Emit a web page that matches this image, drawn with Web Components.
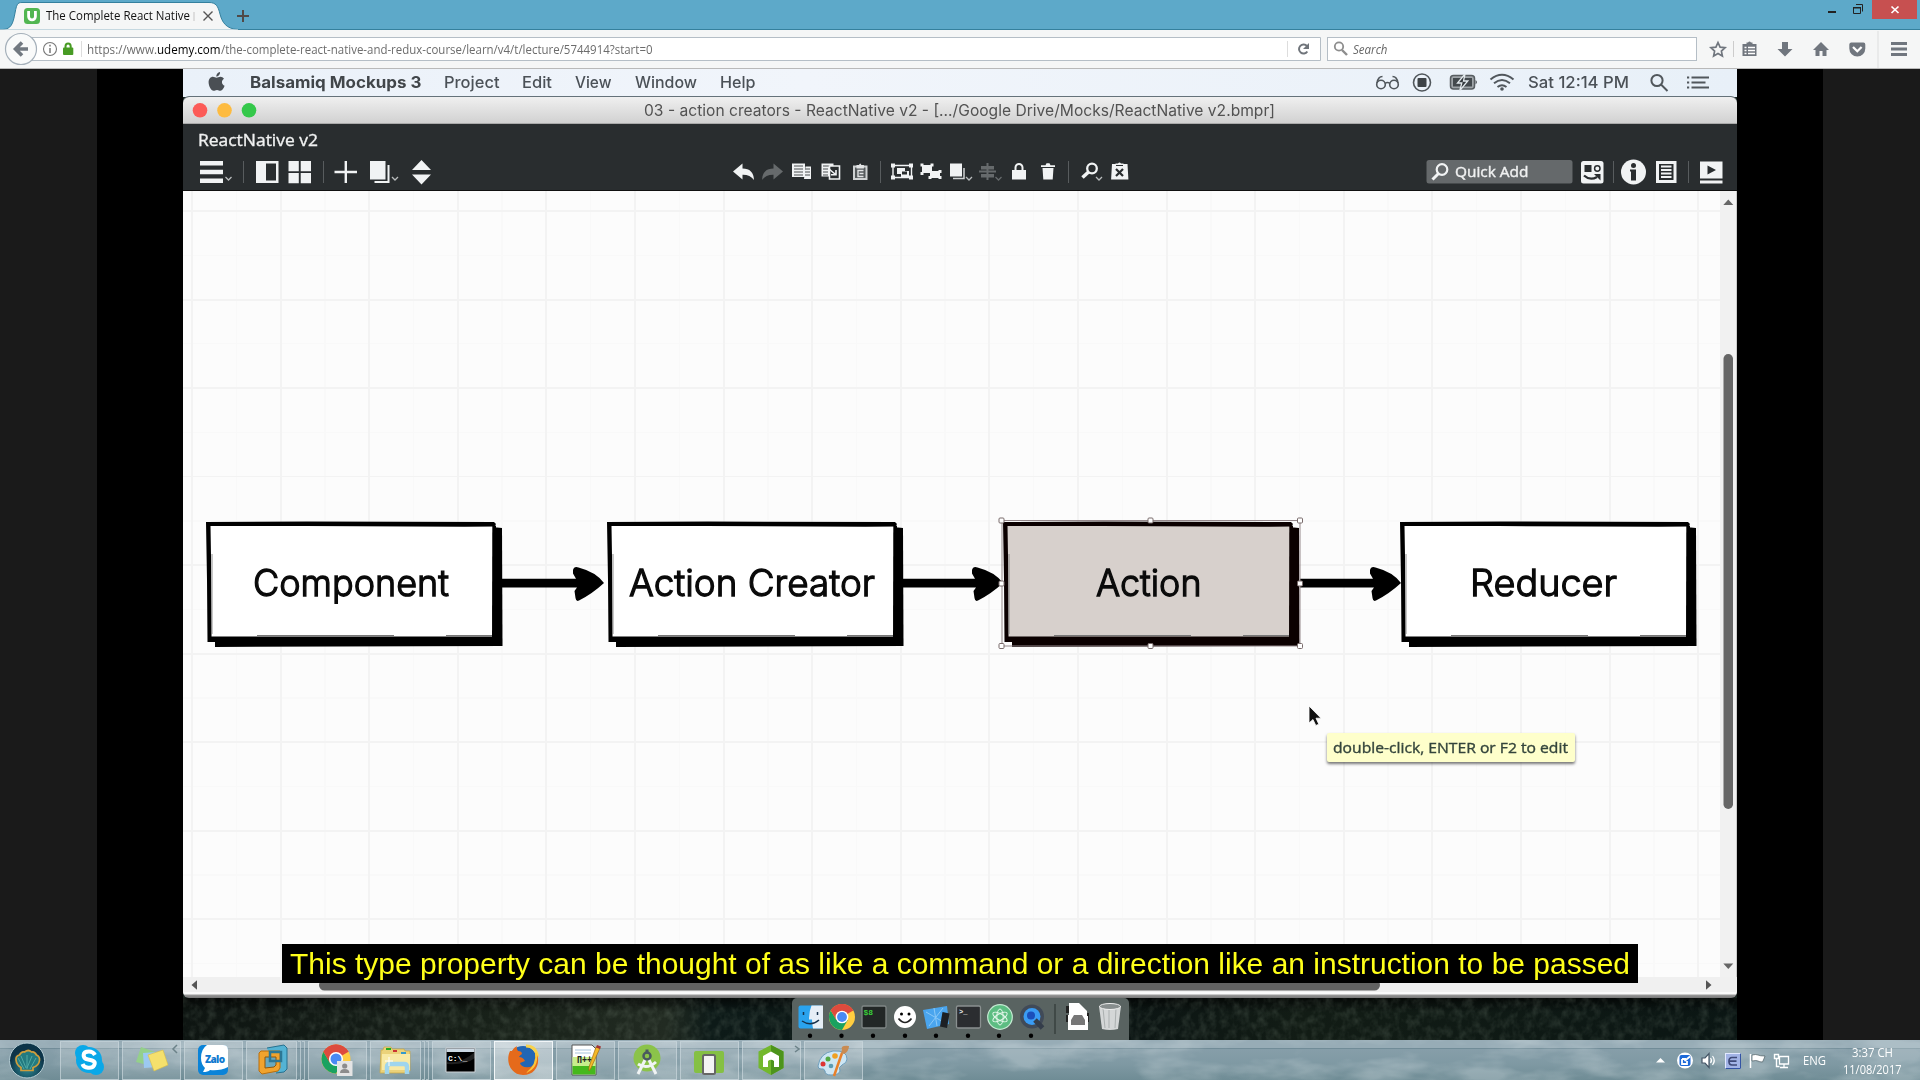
<!DOCTYPE html>
<html lang="en"><head><meta charset="utf-8"><title>The Complete React Native</title>
<style>
html,body{margin:0;height:100%;background:#000;overflow:hidden}
body{width:1920px;height:1080px;display:flex;flex-direction:column}
body>*{flex:none}
</style></head>
<body>
<browser-tabs></browser-tabs>
<browser-nav></browser-nav>
<lecture-player></lecture-player>
<task-bar></task-bar>
<script>
const UI = "'Open Sans','Noto Sans',sans-serif", MAC = "Inter,sans-serif";

/* Lays out items left to right; drawings use page coordinates through their viewBox. */
function row(x0, y0, h, items) {
  let cur = x0, out = '';
  for (const it of items) {
    const [kind, x, w] = it;
    const m = (x - cur).toFixed(2);
    if (kind === 's') out += `<svg style="flex:none;margin-left:${m}px" width="${w}" height="${h}" viewBox="${x} ${y0} ${w} ${h}">${it[3]}</svg>`;
    else out += `<fit-text w="${w}" b="${it[3] - y0}" style="margin-left:${m}px;${it[4]}">${it[5]}</fit-text>`;
    cur = x + w;
  }
  return `<div class="row" style="height:${h}px">${out}</div>`;
}
const ROW = ':host{box-sizing:border-box}.row{display:flex;align-items:flex-start;flex:none}svg{display:block;overflow:visible}';

function element(name, css, html, after) {
  customElements.define(name, class extends HTMLElement {
    constructor() {
      super();
      this.attachShadow({mode: 'open'});
    }
    connectedCallback() {
      this.shadowRoot.innerHTML = `<style>*{box-sizing:border-box}${ROW}${css}</style>` + (typeof html === 'function' ? html(this) : html);
      if (after) after(this);
    }
  });
}

/* One line of text, scaled to width w, with its baseline b pixels below the top. */
element('fit-text', `:host{display:block;flex:none;height:0;white-space:nowrap;line-height:0}
span{display:inline-block;transform-origin:0 0;line-height:0}span::before{content:'';display:inline-block;height:var(--b)}`,
  '<span><slot></slot></span>', el => {
    const s = el.shadowRoot.querySelector('span'), w = +el.getAttribute('w');
    el.style.width = w + 'px';
    s.style.setProperty('--b', el.getAttribute('b') + 'px');
    const n = s.getBoundingClientRect().width;
    if (n) s.style.transform = `scaleX(${w / n})`;
  });

const chrome = (cx, cy, r) => `<g transform="translate(${cx} ${cy}) scale(${r / 10})">
<circle r="10" fill="#ffcd40"/><path d="M0 0L-8.66-5A10 10 0 0 1 8.66-5Z" fill="#dd4b3e"/><path d="M-8.66-5A10 10 0 0 0 0 10L4.4 2.3L-4.3 2.3Z" fill="#1aa260"/><path d="M0-5H8.66A10 10 0 0 0-8.66-5L-4.3 2.5Z" fill="#dd4b3e"/><circle r="4.9" fill="#fff"/><circle r="3.8" fill="#4a8af4"/></g>`;

element('browser-tabs', ':host{display:block;height:30px;background:#5da9c9;box-shadow:inset 0 -1px #35809d}',
  row(0, 0, 30, [
    ['s', 0, 46, `<path d="M0 30V29.5H3C11 29 13 24 15 13S18 2.5 24 2.5H209C216 2.5 218 6 220 14S226 29 238 29.5V30Z" fill="#f5f6f6" stroke="#34809e"/><path d="M0 30h238" stroke="#f5f6f6" stroke-width="1.2"/>
      <rect x="24" y="8" width="16" height="16" rx="3.5" fill="#51b651"/><path d="M28.6 11v5.5a3.4 3.4 0 0 0 6.8 0V11" fill="none" stroke="#fff" stroke-width="2.8"/>`],
    ['t', 46, 144, 20.3, `font:12px ${UI};color:#111`, 'The Complete React Native'],
    ['s', 192, 60, `<path d="M194 12v9" stroke="#ddd" stroke-width="2"/><path d="M203.500 11.500l9 9m0-9l-9 9" stroke="#555" stroke-width="1.4"/><path d="M237 16h12m-6-6v12" stroke="#504a48" stroke-width="2"/>`],
    ['s', 1820, 97, `<path d="M1828 11h8v2h-8z" fill="#222"/><path d="M1853.500 7.500h7v6h-7zM1856 4.500h6.500v7" fill="none" stroke="#222"/><path d="M1853 7h8v1.500h-8z" fill="#222"/><path d="M1872 0h45v19h-45z" fill="#c75050"/><path d="M1891.500 6.500l7 6.500m0-6.500l-7 6.500" stroke="#fff" stroke-width="1.7"/>`]
  ]));

element('browser-nav', ':host{display:block;height:39px;background:#f5f6f6;border-bottom:1px solid #b9b9b9}',
  row(0, 30, 38, [
    ['s', 0, 87, `<path d="M32 37.500H1320.500V60.500H32Z" fill="#fff" stroke="#b5bec6"/><circle cx="21" cy="49" r="15.500" fill="#f9fafa" stroke="#a5b0ba" stroke-width="1.2"/><path d="M28 49H16M22 42.500L15.500 49l6.500 6.500" fill="none" stroke="#717880" stroke-width="3.600"/>
      <circle cx="50" cy="49" r="6.500" fill="none" stroke="#777" stroke-width="1.1"/><path d="M50 48v5m0-8.200v1.800" stroke="#777" stroke-width="1.5"/><path d="M65.500 48v-1.500a2.600 3 0 0 1 5.200 0V48" fill="none" stroke="#489b24" stroke-width="2"/><rect x="63" y="47.500" width="10.300" height="7.500" rx="1" fill="#489b24"/><path d="M81.500 41v16" stroke="#ddd"/>`],
    ['t', 87, 70, 54, `font:12px ${UI};color:#6c6c6c`, 'https://www.'],
    ['t', 157, 63.5, 54, `font:12px ${UI};color:#000`, 'udemy.com'],
    ['t', 220.5, 431.5, 54, `font:12px ${UI};color:#6c6c6c`, '/the-complete-react-native-and-redux-course/learn/v4/t/lecture/5744914?start=0'],
    ['s', 1287, 63, `<path d="M1287.500 41v16" stroke="#ddd"/><path d="M1307 46.200A4.500 4.500 0 1 0 1307.300 51.500" fill="none" stroke="#70757b" stroke-width="2"/><path d="M1309 43v6h-6z" fill="#70757b"/>
      <rect x="1327.500" y="37.500" width="369" height="23" fill="#fff" stroke="#b5bec6"/><circle cx="1339" cy="46.500" r="4.200" fill="none" stroke="#8d8d8d" stroke-width="1.800"/><path d="M1342 50l5 5" stroke="#8d8d8d" stroke-width="2.400"/>`],
    ['t', 1353, 34.5, 54, `font:italic 12px ${UI};color:#666`, 'Search'],
    ['s', 1705, 210, `<g fill="#70767e"><path d="M1718 42.500l2.100 4.600 5 .6-3.700 3.400 1 5-4.400-2.500-4.400 2.500 1-5-3.700-3.400 5-.6z" fill="none" stroke="#70767e" stroke-width="1.700"/><path d="M1733 41h1v16h-1z" fill="#ccc"/>
      <path d="M1746.500 44v-1.500h1.500q1.500-2 3 0h1.500v1.500h4V56H1742.500V44z"/><path d="M1744.500 47.500h2m1.500 0h7m-10.500 3h2m1.500 0h7m-10.500 3h2m1.500 0h7" stroke="#fff" stroke-width="1.500"/>
      <path d="M1782 42h6v7h4.500l-7.500 7.500-7.500-7.500h4.500z"/><path d="M1821 42l8 8h-2.500v6h-4v-5h-3v5h-4v-6h-2.500z"/>
      <path d="M1851 42.500h12.500a2 2 0 0 1 1.800 2v4a8 8 0 0 1-16 0v-4a2 2 0 0 1 1.700-2z"/><path d="M1853 47l4.300 4.200 4.300-4.200" fill="none" stroke="#fff" stroke-width="2.300"/><path d="M1877.500 31h1v37h-1z" fill="#ddd"/>
      <path d="M1891 42h16v3h-16zm0 5.500h16v3h-16zm0 5.500h16v3h-16z"/></g>`]
  ]));

element('mac-menubar', `:host{display:block;height:28px;background:linear-gradient(90deg,#eaf1f9,#f1f5fb 40%,#e8f0f8);}`,
  row(183, 69, 28, [
    ['s', 208, 18, `<path d="M220 72c.3 2.400-1.700 4.500-3.800 4.500 0-2.200 1.700-4.200 3.800-4.500M216.500 77.800c1 0 2.300-1 4-1 1.300 0 2.700.8 3.500 2-3 1.700-2.600 5.700.6 7-.7 2.100-2.400 4.900-4.200 4.900-1.300 0-1.800-.8-3.400-.8s-2.200.8-3.400.8c-2.600 0-5-5-5-8.500 0-3.300 2.100-5.400 4.300-5.400 1.500 0 2.600 1 3.600 1z" fill="#4a4f54"/>`],
    ['t', 249.500, 171.5, 88.3, `font:700 16px ${MAC};color:#41464a`, 'Balsamiq Mockups 3'],
    ...[[443.5, 55.5, 'Project'], [521.5, 30, 'Edit'], [575, 36.500, 'View'], [635, 62, 'Window'], [720, 35.500, 'Help']].map(a => ['t', a[0], a[1], 88.3, `font:500 16px ${MAC};color:#4b5157`, a[2]]),
    ['s', 1376, 140, `<g fill="none" stroke="#51575c" stroke-width="1.600"><circle cx="1381" cy="84.500" r="4.300"/><circle cx="1394" cy="84.500" r="4.300"/><path d="M1385 83.500q2.500-2 5 0M1377 83q1-6.500 5.500-6.500M1398 83q-1-6.500-5.500-6.500"/><circle cx="1422" cy="82.500" r="8.500"/></g><rect x="1417.500" y="78" width="9" height="9" rx="1" fill="#3e4347"/>
      <rect x="1450.500" y="75.500" width="24" height="13.500" rx="3" fill="#9fa5a9" stroke="#575d61" stroke-width="1.500"/><path d="M1475.500 80q3 2.200 0 4.500z" fill="#575d61"/><path d="M1453 78h19v8.500h-19z" fill="#43494d"/><path d="M1465 74l-7.500 9h4.300l-2 7.500 8-9.500h-4.300z" fill="#33393d" stroke="#e4eaee" stroke-width="1.300"/>
      <g fill="none" stroke="#51575c" stroke-width="2"><path d="M1490.500 79.500q11.500-9.500 23 0M1494 83.300q8-6.500 16 0M1497.500 87q4.500-3.500 9 0"/></g><circle cx="1502" cy="89" r="1.800" fill="#51575c"/>`],
    ['t', 1528, 101, 88.3, `font:500 16px ${MAC};color:#4b5157`, 'Sat 12:14 PM'],
    ['s', 1650, 62, `<g fill="none" stroke="#51575c" stroke-width="2"><circle cx="1657" cy="80.500" r="5.600"/><path d="M1661 84.500l6.500 6.500"/><path d="M1691.500 77.500H1709M1691.500 82.500h14M1691.500 87.500H1709M1687 77.500h2.200m-2.200 5h2.200m-2.200 5h2.200" stroke-width="2.200"/></g>`]
  ]));

const chev = (x, c = '#b9bcbd') => `<path d="M${x} 177l3 3 3-3" fill="none" stroke="${c}" stroke-width="1.300"/>`;
element('mockup-toolbar', `:host{display:block;height:67px;background:#292d2f;border-bottom:1px solid #111}`,
  row(183, 124, 29, [['t', 197.5, 120, 146, `font:400 16px ${UI};color:#f0f1f1;-webkit-text-stroke:.35px #f0f1f1`, 'ReactNative v2']]) +
  row(183, 153, 37, [
    ['s', 200, 235, `<g fill="#f1f3f4"><path d="M200 161h23v4.500h-23zm0 8.800h23v4.500h-23zm0 8.700h23v4.500h-23z"/>${chev(225.500)}<path d="M243 161h1v22h-1zm80 0h1v22h-1z" fill="#585c5e"/>
      <path d="M256 161h22.500v22H256zm10 2.500v17h10v-17z" fill-rule="evenodd"/><path d="M288.500 161h10.300v10.200h-10.300zm12.200 0H311v10.200h-10.300zm-12.200 12h10.300v10.200h-10.300zm12.200 0H311v10.200h-10.300z"/><path d="M334.500 170.800h22.500v2.400h-22.500zM344.600 161h2.400v22h-2.400z"/>
      <path d="M370 161h15.500v18.500H370z"/><path d="M388.500 165v17h-14" fill="none" stroke="#f1f3f4" stroke-width="2"/>${chev(392)}<path d="M421.500 160l9.500 10h-19zM421.500 184.500l-9.500-10h19z"/></g>`],
    ['s', 733, 400, `<g fill="#f1f3f4"><path d="M733 171.500l9.500-8v5q11 0 11.500 11.500-4-5.500-11.500-5.300v4.800z"/><path d="M783 171.500l-9.500-8v5q-11 0-11.500 11.500 4-5.500 11.500-5.300v4.800z" fill="#666a6c"/>
      <path d="M792 163.500h13V177h-13z"/><path d="M794 166h9m-9 3h9m-9 3h9m-9 3h9" stroke="#4a4e50"/><path d="M805.500 166.500h5.500v12.500h-7" fill="#f1f3f4"/><path d="M805 169h5m-5 3h5m-5 3h5" stroke="#4a4e50"/>
      <path d="M821.500 163.500h12v13h-12z"/><path d="M823 166h7m-7 3h5m-5 3h5m-5 3h5" stroke="#4a4e50"/><path d="M829.500 166h10v13h-10z" fill="#292d2f" stroke="#f1f3f4" stroke-width="1.600"/><path d="M829 169l6 5m1-4v4.800h-5" fill="none" stroke="#f1f3f4" stroke-width="1.600"/>
      <path d="M854 166.500h12.500v12.500h-12.500z" fill="#555a5c" stroke="#cfd2d3" stroke-width="2"/><path d="M856.500 168.500v-3.500h2.500q1.200-3 2.400 0h2.500v3.500z" fill="#e2e4e5"/><path d="M863.500 170.500h-5.500v6h5.500m-4-3h4" fill="none" stroke="#e2e4e5" stroke-width="1.400"/>
      <path d="M880 161h1v22h-1zM1068 161h1v22h-1z" fill="#585c5e"/>
      <path d="M893 165.500h18.500v12h-18.500z" fill="none" stroke="#f1f3f4" stroke-width="1.400"/><path d="M891 163.500h4v4h-4zm18 0h4v4h-4zm-18 12h4v4h-4zm18 0h4v4h-4z"/><path d="M897 168h8v3h4v6h-8v-3h-4z"/><path d="M902 171.500h5v3h-5z" fill="#292d2f"/>
      <path d="M922 165h10v8h-10zM930 171h10v7h-10z"/><path d="M920.500 163.500h3v3h-3zm10 0h3v3h-3zm-10 8.500h3v3h-3zm8 4h3v3h-3zm10-6h3v3h-3zm0 6h3v3h-3z"/>
      <path d="M950 163.500h12v13h-12z"/><path d="M964 168v10.500h-11" fill="none" stroke="#cfd2d3" stroke-width="1.500"/>${chev(966)}
      <path d="M986.500 163h2v17h-2zM981 166h13v3.500h-13zM979 170.500h17v2h-17zM981 174h13v3.500h-13z" fill="#666a6c"/>${chev(995.500, '#666a6c')}
      <path d="M1012 170h14v9.500h-14z"/><path d="M1015.500 171v-3.500a3.500 3.500 0 0 1 7 0v3.500" fill="none" stroke="#f1f3f4" stroke-width="2"/>
      <path d="M1042.500 168h11l-.8 11.500h-9.400zM1041 165.200h4.500l1-2h3l1 2h4.500v1.800h-14z"/>
      <circle cx="1092" cy="168.500" r="4.800" fill="none" stroke="#f1f3f4" stroke-width="2.300"/><path d="M1088.500 172l-6 5.500" stroke="#f1f3f4" stroke-width="3.500"/>${chev(1096)}
      <path d="M1112 164h4v2h7v-2h4.500l.9 15.500h-17.300z"/><path d="M1115.500 165v-1.500h2.500q1.500-2 3 0h2.500v1.500z"/><path d="M1116 169l7 7m0-7l-7 7" stroke="#292d2f" stroke-width="2.200"/></g>`],
    ['s', 1426, 29, `<rect x="1426.500" y="160" width="146" height="23.500" rx="2.500" fill="#65696b"/><circle cx="1442" cy="169.500" r="5.300" fill="none" stroke="#f1f3f4" stroke-width="2.200"/><path d="M1438.500 173.500l-6 6" stroke="#f1f3f4" stroke-width="3"/>`],
    ['t', 1455, 73.5, 176.6, `font:400 15px ${UI};color:#f0f1f1;-webkit-text-stroke:.4px #f0f1f1;position:relative`, 'Quick Add'],
    ['s', 1581, 145, `<rect x="1581" y="161" width="22.500" height="22.500" rx="2.500" fill="#f1f3f4"/><path d="M1584.500 165h7v7h-7z" fill="#292d2f"/><circle cx="1597.300" cy="168.500" r="2.700" fill="none" stroke="#292d2f" stroke-width="1.500"/><path d="M1584 175.500q6 5.500 13 1.500" fill="none" stroke="#292d2f" stroke-width="2.300"/><path d="M1594 174h6.500v6.500z" fill="#292d2f"/><path d="M1613 161h1v22h-1zM1688 161h1v22h-1z" fill="#585c5e"/>
      <circle cx="1633.500" cy="172" r="12.500" fill="#f1f3f4"/><circle cx="1633.500" cy="165.500" r="2.500" fill="#292d2f"/><path d="M1630 169.500h6v11h-5v-9h-1z" fill="#292d2f"/>
      <path d="M1656 161h20.500v22H1656z" fill="#f1f3f4"/><path d="M1659 164h14.500v16H1659z" fill="#292d2f"/><path d="M1661 166.500h10.500m-10.500 3.500h10.500m-10.500 3.500h10.500m-10.500 3.500h10.500" stroke="#f1f3f4" stroke-width="1.800"/>
      <path d="M1700 161.500h22.500v17H1700zM1700 180.500h22.500v3H1700z" fill="#f1f3f4"/><path d="M1707.500 165.500l8.500 4.500-8.500 4.500z" fill="#292d2f"/>`]
  ]));

element('title-bar', ':host{display:block;height:27px;background:linear-gradient(#f0f0f0,#e6e6e6 30%,#d0d0d0);border-radius:6px 6px 0 0;box-shadow:0 -1px #65727a,inset 0 -1px #aaa}',
  row(183, 97, 27, [
    ['s', 192, 66, `<circle cx="200" cy="110.300" r="7.300" fill="#fc5b57"/><circle cx="224.500" cy="110.300" r="7.300" fill="#fdbb40"/><circle cx="249" cy="110.300" r="7.300" fill="#34c84a"/>`],
    ['t', 644, 631, 116, `font:400 15.5px ${MAC};color:#525252`, '03 - action creators - ReactNative v2 - [.../Google Drive/Mocks/ReactNative v2.bmpr]']
  ]));

element('diagram-node', `:host{position:absolute;top:329px;width:297px;height:129px;z-index:0}.in{display:flex}svg{position:absolute;inset:0;z-index:-1}`,
  el => {
    const sel = el.hasAttribute('selected'), ink = sel ? '#0b0000' : '#000', x = +el.dataset.x, w = +el.dataset.w;
    return `<svg width="297" height="129" viewBox="0 0 297 129">
      <path d="M8.500 9.500L290 7.500l5 .5.500 118L8 127z" fill="${ink}"/>
      <path d="M1.500 4L287 3.500 286.500 118 1.800 118z" fill="${sel ? '#d7d0cc' : '#fff'}"/>
      <path d="M-1 2L100 1.500 287 2l2 2-1.500 2.500-30 .3-160-.8-94-.1L4 36 4.500 116.500H287.500V122H.5L0 60z" fill="${ink}"/>
      <path d="M285.300 6L289 5.500 291 122h-6z" fill="${ink}"/>
      <path d="M50 115.500h137m52 0h46" stroke="#777" stroke-width="1"/><path d="M5 34v80" stroke="#777" stroke-width=".8"/>
      </svg><div class="in"><fit-text w="${w}" b="75.500" style="margin-left:${x}px;font:300 37px Inter,sans-serif;font-variant-ligatures:none;color:#0a0a0a;-webkit-text-stroke:1.300px #0a0a0a">${el.getAttribute('label')}</fit-text></div>`;
  });
element('diagram-arrow', ':host{position:absolute;top:374.500px;height:36px}', el => {
  const w = +el.getAttribute('w');
  return `<svg width="${w}" height="36" viewBox="${-w} -17 ${w} 36"><path d="M${-w} -4.200H-28L-31-9.500V-13Q-30-17-25.500-15.500Q-8-11 0 0Q-12 11-25 17.500Q-28 19-28.500 15L-29.500 8-27 4.500H${-w}Z" fill="#000"/></svg>`;
});
element('tool-tip', ':host{display:block;position:absolute;left:1143.5px;top:542px;width:248.500px;height:29px;background:#feffcb;box-shadow:0 2px 3px #0008;border-radius:2px}',
  `<fit-text w="235" b="19.700" style="margin-left:6.500px;font:400 14px ${UI};color:#34453c;-webkit-text-stroke:.35px #34453c">double-click, ENTER or F2 to edit</fit-text>`);

element('diagram-canvas', `:host{display:block;position:relative;width:1537px;height:786px;overflow:hidden;background:
  repeating-linear-gradient(90deg,transparent 0 8px,#f3f3f3 8px 10px,transparent 10px 88.600px),
  repeating-linear-gradient(180deg,transparent 0 19px,#f3f3f3 19px 21px,transparent 21px 88.500px),
  repeating-linear-gradient(90deg,transparent 0 52.600px,#f9f9f9 52.600px 54px,transparent 54px 88.600px),
  repeating-linear-gradient(180deg,transparent 0 63.500px,#f9f9f9 63.500px 65px,transparent 65px 88.500px),#fcfcfc}
  .over{position:absolute;left:0;top:0;z-index:2}tool-tip{z-index:3}`,
  () => {
    const h = [];
    for (const [x, y] of [[1001.5, 520.5], [1150.5, 520.5], [1300, 520.5], [1001.5, 583.5], [1300, 583.5], [1001.5, 646], [1150.5, 646], [1300, 646]])
      h.push(`<rect x="${x - 2.500}" y="${y - 2.500}" width="5" height="5" rx="1" fill="#fff" stroke="#796b6b"/>`);
    return `<diagram-node style="left:23.500px" data-x="46.500" data-w="196" label="Component"></diagram-node>
    <diagram-node style="left:424.500px" data-x="21" data-w="246" label="Action Creator"></diagram-node>
    <diagram-node selected style="left:820.500px" data-x="92.500" data-w="105.500" label="Action"></diagram-node>
    <diagram-node style="left:1217.500px" data-x="69.500" data-w="147" label="Reducer"></diagram-node>
    <diagram-arrow w="102" style="left:319px"></diagram-arrow><diagram-arrow w="101" style="left:719px"></diagram-arrow><diagram-arrow w="101" style="left:1117px"></diagram-arrow>
    <svg class="over" width="1537" height="786" viewBox="183 191 1537 786"><rect x="1002" y="520.500" width="298" height="125.500" fill="none" stroke="#94878a"/>${h.join('')}
    <path d="M1309 706v17l4-3.500 2.800 6 3-1.300-2.800-6h5z" fill="#111" stroke="#fff" stroke-width=".8"/></svg><tool-tip></tool-tip>`;
  });

element('v-scroll', ':host{display:block;width:17px;height:786px;background:#f1f1f1;border-right:1px solid #ccc}',
  row(1720, 191, 786, [['s', 1720, 16, '<path d="M1728.300 199.500l5 5.500h-10zM1728.300 969l5-5.500h-10z" fill="#666"/><rect x="1723.500" y="354" width="9.500" height="455" rx="4.700" fill="#666"/>']]));
element('h-scroll', ':host{display:block;height:21px;background:linear-gradient(#f0f0f0 0 15px,#fafafa 15px 17px,#9a9a9a 18px,#777);border-radius:0 0 6px 6px}',
  row(183, 977, 21, [['s', 183, 1553, '<path d="M191.500 985l5.500-4.800v9.600zM1711.500 985l-5.500-4.800v9.600z" fill="#555"/><rect x="319" y="979.500" width="1061" height="11" rx="5.500" fill="#626262"/>']]));

element('mac-dock', ':host{display:block;width:337px;height:42px;background:#596361;border-radius:5px 5px 0 0}',
  row(792, 998, 42, [['s', 792, 337, `
    <rect x="798.500" y="1005.500" width="24.500" height="23" rx="2" fill="#2aa3ee"/><path d="M811.500 1005.500h11.500v23h-10q-1-5-1-9h-3q0-8 2.500-14z" fill="#e6eef6"/><path d="M803.500 1012v3m14-3v3M802 1021q9 6 17-1" stroke="#16324c" stroke-width="1.500" fill="none"/>
    ${chrome(842, 1017, 13)}
    <rect x="862" y="1006" width="24" height="22" rx="1.500" fill="#222726" stroke="#7f8685" stroke-width="1.300"/><text x="863.500" y="1015" font-family="Liberation Mono" font-weight="700" font-size="8" fill="#39cf39">$8</text>
    <circle cx="905" cy="1017" r="11" fill="#fff"/><circle cx="901.500" cy="1014" r="1.500"/><circle cx="909" cy="1014" r="1.500"/><path d="M898.500 1018.500q6.500 8 13 0" fill="none" stroke="#222" stroke-width="1.700"/>
    <path d="M923 1010l24-4 2 18-22 5z" fill="#4aa5ee"/><path d="M926 1012l19 11m-16 3l14-18m-9 0l3 18" stroke="#8cc9f7" stroke-width="1"/><path d="M942.500 1012l7 1.500-2.500 14.500-7-1.500z" fill="#1d2024"/>
    <rect x="956.500" y="1006" width="24" height="22" rx="1.500" fill="#2b2d30" stroke="#8a9090" stroke-width="1.300"/><text x="959" y="1014" font-family="Liberation Mono" font-weight="700" font-size="7" fill="#eee">&gt;_</text>
    <circle cx="1000" cy="1017" r="12.300" fill="#5cbd82" stroke="#c5ebd3" stroke-width="1.200"/><g fill="none" stroke="#e3f6ea" stroke-width="1"><ellipse cx="1000" cy="1017" rx="8" ry="3.200" transform="rotate(30 1000 1017)"/><ellipse cx="1000" cy="1017" rx="8" ry="3.200" transform="rotate(90 1000 1017)"/><ellipse cx="1000" cy="1017" rx="8" ry="3.200" transform="rotate(150 1000 1017)"/></g>
    <circle cx="1032" cy="1016.500" r="12" fill="#404a58"/><circle cx="1032" cy="1016.500" r="8.500" fill="#3a9cf4"/><circle cx="1031" cy="1015.500" r="4" fill="#1b4fba"/><path d="M1035 1020l7.500 8" stroke="#343d4a" stroke-width="5"/>
    <path d="M1055 1004v30" stroke="#333c3a" stroke-width="1.300"/><path d="M1066 1006h3v7h-3zM1066 1015h3v7h-3zM1085 1013h4v9h-4z" fill="#222"/><path d="M1069 1003h10l8 8v5h1v14h-20v-15h1z" fill="#fff"/><path d="M1071 1020l3-5h8l3 5v5h-14z" fill="#777"/>
    <path d="M1099 1006h22l-3 23q-8 2-16 0z" fill="#d4d7d7"/><path d="M1103 1008l2 20m4-20v20m7-20l-1 20" stroke="#aaafaf"/><ellipse cx="1110" cy="1006.500" rx="10.500" ry="3" fill="#888e8e" stroke="#f0f0f0"/>
    ${[810, 841.5, 873, 905, 936, 968, 999, 1031].map(x => `<circle cx="${x}" cy="1035.700" r="2.200"/>`).join('')}`]]));

element('video-caption', `:host{display:flex;position:absolute;left:282px;top:875px;width:1356px;height:38.500px;background:#000}`,
  `<fit-text w="1340" b="30" style="margin-left:8px;font:30px 'Liberation Sans',sans-serif;color:#ffff19">This type property can be thought of as like a command or a direction like an instruction to be passed</fit-text>`);

element('lecture-player', `:host{display:flex;position:relative;height:971px;background:#000;justify-content:space-between}
  .side{width:97px;background:#1a1a1a}.video{width:1554px;display:flex;flex-direction:column;background:#18231f;overflow:hidden}.video>*{flex:none}.body{display:flex}
  .video>.desk{flex:1;position:relative;overflow:hidden;display:flex;justify-content:center;background:linear-gradient(#000a,#0000 14px),linear-gradient(90deg,#0e1512,#182119 20%,#222b22 31%,#0d1a18 34%,#0b1413 60%,#121c15 72%,#0b1614)}
  .desk svg{position:absolute;left:0;top:0;opacity:.22}mac-dock{position:relative;left:.5px}`,
  `<div class="side"></div><div class="video"><mac-menubar></mac-menubar><title-bar></title-bar><mockup-toolbar></mockup-toolbar>
  <div class="body"><diagram-canvas></diagram-canvas><v-scroll></v-scroll></div><h-scroll></h-scroll>
  <div class="desk"><svg width="1554" height="42"><filter id="n" x="0" y="0" width="1" height="1"><feTurbulence type="fractalNoise" baseFrequency=".12 .1" numOctaves="3" seed="4"/><feColorMatrix values="0 0 0 0 .3  0 0 0 0 .38  0 0 0 0 .3  1.800 0 0 0 -.7"/></filter><rect width="1554" height="42" filter="url(#n)"/></svg><mac-dock></mac-dock></div></div>
  <div class="side"></div><video-caption></video-caption>`);

element('task-button', `:host{display:flex;gap:1px;width:59px;height:39px}.b{flex:1;border:1px solid #c9d6dcb0;background:linear-gradient(#ffffff38,#ffffff18);display:flex;align-items:center;justify-content:center}
  .b svg{margin:-2px 0 0 -2px}.e{width:3px;border:1px solid #c9d6dcb0;border-left:0}:host([active]) .b{border-color:#f2f6f8;background:linear-gradient(#ffffff70,#ffffff60)}`,
  el => `<div class="b"><svg width="34" height="34" viewBox="-17 -17 34 34">${ICONS[el.getAttribute('icon')]}</svg></div>` + (el.hasAttribute('stack') ? '<div class="e"></div><div class="e"></div>' : ''));
const ICONS = {
  skype: `<circle r="13" fill="#0aa8e8"/><circle cx="-6" cy="-7" r="8" fill="#0aa8e8"/><circle cx="7" cy="7" r="8" fill="#0aa8e8"/><path d="M6-5Q4-8.500 0-8.500C-7-8.500-7-1.500-1-.5S7 2 5 5.500-5 8.500-6.500 4" fill="none" stroke="#fff" stroke-width="4"/>`,
  notes: `<path d="M-10-13l14 5-4 14-15-4z" fill="#94d08a"/><path d="M-8-7l14-1 1 15-14 1z" fill="#9cc9f0"/><path d="M-3-5l15-5 5 15-14 6z" fill="#f5e06c" stroke="#d8bd45" stroke-width=".6"/><path d="M26-15l-4 4 4 4" fill="none" stroke="#6c8289" stroke-width="1.500"/>`,
  zalo: `<rect x="-15" y="-15" width="30" height="30" rx="5" fill="#0a83d8"/><path d="M15 7V-10q0-5-5-5H-6q-6 4-6 13 0 6 4 10l-2 4q5 0 7-2 10 1 18-3" fill="#fff"/><text x="-8" y="2.500" font-family="Open Sans" font-weight="800" font-size="10" textLength="20" fill="#1079cf">Zalo</text>`,
  vm: `<g transform="translate(2)"><path d="M-6-12L11-15l3 3V9l-3 3-8 1" fill="#54b3d4" stroke="#27718f"/><path d="M-14-7l2-2H7V8L5 11-11 14l-3-3z" fill="#f1a32d" stroke="#b96f0d"/><path d="M-8-3H3V5l-2 2-9 1z" fill="#6aa9bd" stroke="#8f570a"/><path d="M-3-8H8v9H-3z" fill="none" stroke="#2c7794" stroke-width="2.500"/></g>`,
  chrome: chrome(-1, -1, 14.5) + `<path d="M0 1h15.500v15H0z" fill="#e4e4e4"/><circle cx="7.700" cy="6" r="2.600" fill="#8c8c8c"/><path d="M3 13q0-4 4.700-4t4.700 4z" fill="#8c8c8c"/>`,
  folder: `<g transform="translate(1 1)"><path d="M-15-11h2l1-3h7l1 2h12l1 2h5V10l-2 2h-28z" fill="#ebd27a" stroke="#c8a644" stroke-width=".7"/><path d="M-14-7h28V9h-28z" fill="#f8e9a4"/><path d="M-10-13h5v2h-5z" fill="#2a2"/><path d="M-3-11h4v2h-4z" fill="#c33"/><path d="M5-9h5v2H5z" fill="#39c"/><path d="M-9 13V6q0-3 3-3H8q3 0 3 3v7" fill="none" stroke="#9fd5ee" stroke-width="4.500"/><path d="M-7-4v9m-4-5h8" stroke="#fff"/></g>`,
  cmd: `<path d="M-15-12h29v24h-29z" fill="#000" stroke="#ccd2d6"/><path d="M-14.500-11.500h28v3.500h-28z" fill="#ccd8e2"/><text x="-13" y="1" font-family="Liberation Mono" font-weight="700" font-size="8" fill="#fff">C:\\_</text><path d="M-14 11.500V2Q0 4 14-8v6Q5 5-14 4" fill="#fff" fill-opacity=".13"/>`,
  firefox: `<circle r="14" fill="#2266b4"/><path d="M3-14Q13-14 14.500-3" fill="none" stroke="#f8d24b" stroke-width="3"/><path d="M-5-9q-2-3-1-5-4 2-5 5h-2C-18 2-12 15 0 15S17 5 14.500-5Q13 5 7 7-2 8-3 3L2 1q-2-4-6-4 1-2 3-3 0-3-4-3z" fill="#e56a1b"/><path d="M14-7Q16 8 3 13 14 4 12-7z" fill="#fbc638"/>`,
  npp: `<path d="M-13-15H7l4 4V15h-24z" fill="#fff" stroke="#555"/><path d="M-12.500 3H10.500V14.500h-23z" fill="#45b81c"/><path d="M-12.500-3H10.500V6h-23z" fill="#c8ee8c"/><path d="M-10-10H6m-16 3H6" stroke="#a9c4dd"/><text x="-8" y="3" font-family="Liberation Mono" font-weight="700" font-size="11" textLength="15" lengthAdjust="spacingAndGlyphs" fill="#222">Π++</text><path d="M15-12L6 8 4 11V7l7-20z" fill="#f4b928" stroke="#a36b12" stroke-width=".7"/><path d="M12-15l4 1.500-1 2.500-4-1.500z" fill="#a23333"/>`,
  studio: `<circle cy="-2" r="13.500" fill="#8bc34a"/><path d="M-1-2L-9 14M1-2l8 16M-9 4Q0 10 9 2" fill="none" stroke="#f0f4f4" stroke-width="3"/><circle cy="-4" r="3.500" fill="#8bc34a" stroke="#4a5a5f" stroke-width="2.500"/><path d="M0-10.500v4" stroke="#4a5a5f" stroke-width="3"/>`,
  device: `<rect x="-15" y="-9" width="30" height="22" rx="2" fill="#85c044"/><rect x="-6" y="-5" width="12" height="19" rx="1.500" fill="#f4f4f4" stroke="#666" stroke-width="2"/>`,
  nox: `<path d="M0-15L12.500-8.500V8L0 15-12.500 8V-8.500z" fill="#73b82d"/><path d="M0-15L12.500-8.500V8L0 15z" fill="#4d941c"/><path d="M-8 7V-4L0-8.500 8-4V7H3V1q-3-2.500-6 0v6z" fill="#fff"/><path d="M24-14l4 3-4 3" fill="none" stroke="#6c8289" stroke-width="1.500"/>`,
  paint: `<g transform="translate(0 2)"><path d="M-15 4Q-13-9 0-11 14-12 14-3 14 1 9 3 5 5 7 9 6 13-2 13-8 13-8 9-9 6-12 7-15 7-15 4z" fill="#cde6f4" stroke="#6e9ebc"/><circle cx="-10" cy="2" r="2.500" fill="#d33"/><circle cx="-5" cy="-3" r="2.500" fill="#5a4"/><circle cx="2" cy="-6" r="2.800" fill="#f0a020"/><circle cx="-2" cy="4" r="2.300" fill="#5b9bb4"/><path d="M1 14L9-9" stroke="#e8802a" stroke-width="2.500"/><path d="M8-9l1-3q-2-5 7-4 0 5-5 8z" fill="#c98b52"/></g>`
};
element('start-orb', ':host{display:flex;width:60px;height:40px}', `<svg width="60" height="40" viewBox="0 1040 60 40"><defs><radialGradient id="o" cy=".7"><stop offset="0" stop-color="#2e8e98"/><stop offset="1" stop-color="#0d3448"/></radialGradient></defs><circle cx="27" cy="1060.500" r="17.500" fill="url(#o)" stroke="#b6cdd4"/><path d="M21 1070.500h12v-3q6-2 6.500-7 .5-4-3-5.500-2-4-5-3-3-3-7 0-3-1-5 3-4 1-3.500 5 .5 5 5 7.500z" fill="#237a80" stroke="#cf9d3b" stroke-width="1.700"/><path d="M27 1069v-14m-3 14l-6-11m12 11l6-11m-10 10l-5-12m6 12l5-12" stroke="#51a9a4" stroke-width="1"/></svg>`);
element('system-tray', ':host{display:block}', row(1650, 1040, 40, [
  ['s', 1650, 142, `<path d="M1660.500 1058l4.500 4.500h-9z" fill="#fff"/><circle cx="1685" cy="1060.500" r="8" fill="#fff"/><rect x="1679.500" y="1055" width="11" height="11" rx="2" fill="#1d69d8"/><path d="M1690 1056.500l-5.500 4.500M1682 1059h4m-4 0v5h5v-3" fill="none" stroke="#fff" stroke-width="1.800"/>
    <g fill="none" stroke="#fff" stroke-width="1.200"><path d="M1702 1058h3l4-4.500v14l-4-4.500h-3z" fill="#fff" stroke="#456"/><path d="M1710.500 1058q2 2.500 0 5M1712.500 1056q3.500 4.500 0 9"/></g>
    <rect x="1725.500" y="1053.500" width="15" height="15" fill="#a3b4e6" stroke="#e2e9ff"/><path d="M1725.500 1068.500h15v-15" fill="none" stroke="#3454a4"/><path d="M1737 1057.500h-5q-3 0-3 3.700t3 3.800h5m-7.500-3.800h7" fill="none" stroke="#3f4a78" stroke-width="1.700"/>
    <path d="M1750.500 1054v14" stroke="#fff" stroke-width="1.500"/><path d="M1752 1055q4-1 6 0t7 1q-1 3-2.500 6-3 0-4.500-1t-6 0z" fill="#fff" stroke="#4c5b62" stroke-width=".7"/>
    <path d="M1779.500 1056.500h9v7.500h-9zm4.500 7.500v3m-4 .5h8" fill="none" stroke="#fff" stroke-width="1.300"/><path d="M1774.500 1054.500h4v4h-4zm2 4v8h3" fill="none" stroke="#fff" stroke-width="1.400"/>`],
  ['t', 1803, 23, 1065, `font:12px ${UI};color:#fff`, 'ENG'],
  ['s', 1827, 10, ''],
]));
element('tray-clock', ':host{display:flex;flex-direction:column;width:83px}', row(1837, 1040, 20, [['t', 1852, 41, 1057, `font:12px ${UI};color:#fff`, '3:37 CH']]) + row(1837, 1060, 20, [['t', 1843, 58.5, 1074, `font:12px ${UI};color:#fff`, '11/08/2017']]));
element('task-bar', `:host{display:flex;position:relative;overflow:hidden;height:40px;background:linear-gradient(#97acb6 0 8px,#718c98 8px 9px,#869ea9 9px,#7f99a3 24px,#6f8c95)}
  .apps{display:flex;gap:3px;padding-top:1px;flex:1}.tex{position:absolute;left:0;top:0;opacity:.28}start-orb,.apps,system-tray,tray-clock{position:relative}`,
  `<svg class="tex" width="1920" height="40"><filter id="m" x="0" y="0" width="1" height="1"><feTurbulence type="fractalNoise" baseFrequency=".014 .04" numOctaves="4" seed="9"/><feColorMatrix values="0 0 0 0 .78  0 0 0 0 .84  0 0 0 0 .86  0 3 0 0 -1.200"/></filter><rect width="1920" height="40" filter="url(#m)"/></svg>
  <start-orb></start-orb><div class="apps">${['skype', 'notes', 'zalo', 'vm', 'chrome', 'folder', 'cmd', 'firefox', 'npp', 'studio', 'device', 'nox', 'paint'].map(n => `<task-button icon="${n}"${n === 'vm' || n === 'folder' ? ' stack' : ''}${n === 'firefox' ? ' active' : ''}></task-button>`).join('')}</div><system-tray></system-tray><tray-clock></tray-clock>`);
</script>
</body></html>
